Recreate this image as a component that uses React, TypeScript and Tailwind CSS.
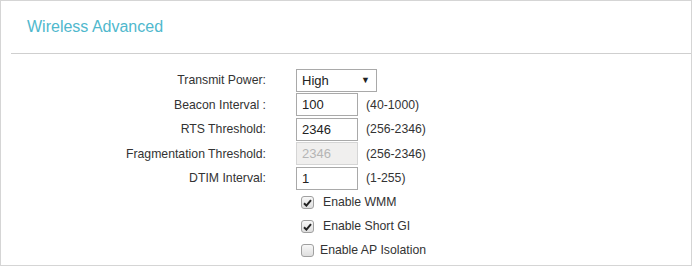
import React, { useState } from "react";

const font = { fontFamily: '"Liberation Sans", Arial, sans-serif' };

//one label + control row
const Row = ({ label, children }: { label: string; children: React.ReactNode }) => {
  return (
    <div className="flex items-center h-[24.5px]">
      <div className="w-[265px] text-right text-[12.25px] text-[#333]">{label}</div>
      <div className="pl-[30px] flex items-center">{children}</div>
    </div>
  );
};

const Field = ({ value, disabled }: { value: string; disabled?: boolean }) => (
  <input
    value={value}
    disabled={disabled}
    readOnly
    className={`w-[62px] h-[23px] border px-[5px] text-[13px] outline-none ${
      disabled ? "bg-[#f0efee] text-[#b5b5b5] border-[#d5d5d5]" : "bg-white text-[#222] border-[#a9a9a9]"
    }`}
    style={font}
  />
);

const Check = ({ label, checked }: { label: string; checked: boolean }) => {
  const [on, setOn] = useState(checked);
  return (
    <label className="flex items-center h-[24px] pl-[300px] text-[12.25px] text-[#333] cursor-pointer">
      <span
        onClick={() => setOn(!on)}
        className="w-[13px] h-[13px] rounded-[3px] border border-[#a0a0a0] bg-gradient-to-b from-[#f8f8f8] to-[#dedede] flex items-center justify-center"
      >
        {on && (
          <svg width="9" height="8" viewBox="0 0 9 8">
            <path d="M1 4.2 L3.4 6.6 L8 1.2" stroke="#222" strokeWidth="2" fill="none" />
          </svg>
        )}
      </span>
      <span className={on ? "ml-[9px]" : "ml-[6px]"}>{label}</span>
    </label>
  );
};

export default function App() {
  return (
    <div className="w-[692px] h-[266px] bg-white border border-[#d5d5d5]" style={font}>
      <div className="h-[52px] flex items-center pl-[26px] text-[16px] text-[#4fb8cd]">
        Wireless Advanced
      </div>
      <div className="ml-[10px] border-t border-[#cfcfcf]" />
      <div className="pt-[14px]">
        <Row label="Transmit Power:">
          <div className="w-[81px] h-[23px] border border-[#a9a9a9] flex items-center justify-between pl-[5px] pr-[6px] text-[13px] text-[#222]">
            <span>High</span>
            <span className="text-[9px]">▼</span>
          </div>
        </Row>
        <Row label="Beacon Interval :">
          <Field value="100" />
          <span className="ml-[8px] text-[12.25px] text-[#333]">(40-1000)</span>
        </Row>
        <Row label="RTS Threshold:">
          <Field value="2346" />
          <span className="ml-[8px] text-[12.25px] text-[#333]">(256-2346)</span>
        </Row>
        <Row label="Fragmentation Threshold:">
          <Field value="2346" disabled />
          <span className="ml-[8px] text-[12.25px] text-[#333]">(256-2346)</span>
        </Row>
        <Row label="DTIM Interval:">
          <Field value="1" />
          <span className="ml-[8px] text-[12.25px] text-[#333]">(1-255)</span>
        </Row>
        <Check label="Enable WMM" checked />
        <Check label="Enable Short GI" checked />
        <Check label="Enable AP Isolation" checked={false} />
      </div>
    </div>
  );
}
